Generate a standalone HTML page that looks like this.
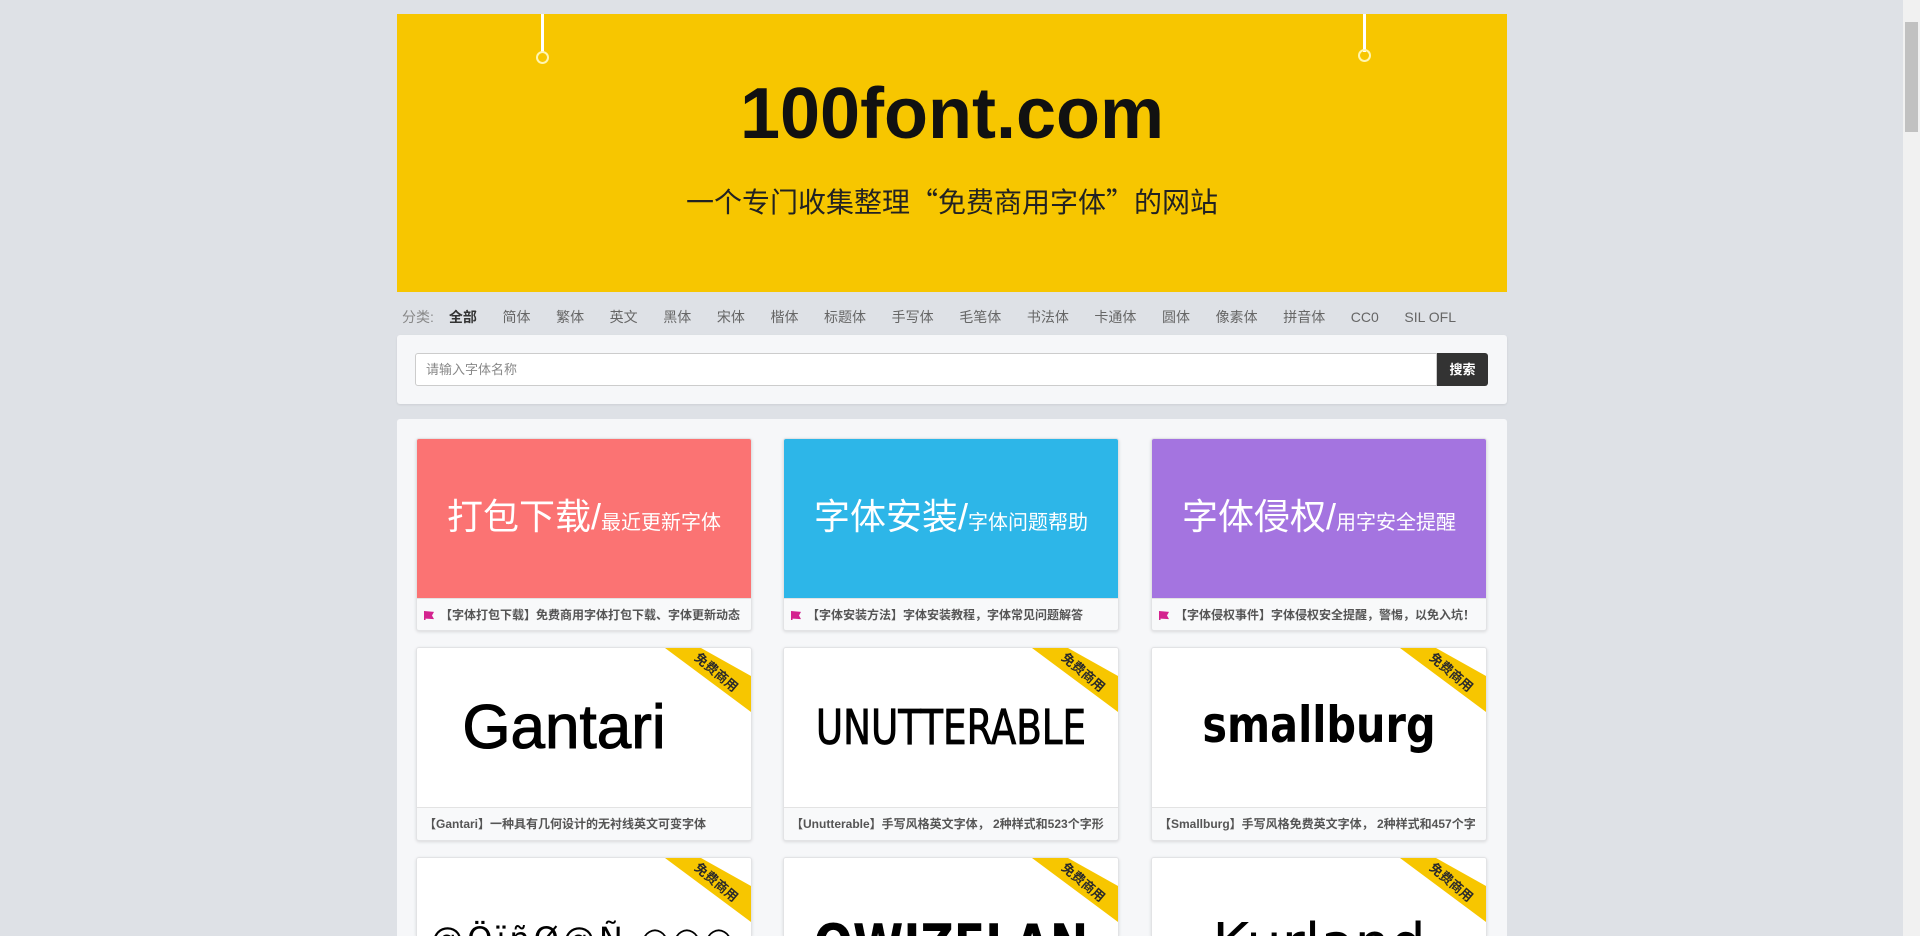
<!DOCTYPE html>
<html><head><meta charset="utf-8">
<style>
*{margin:0;padding:0;box-sizing:border-box}
html,body{width:1920px;height:936px;overflow:hidden;background:#dee1e6;font-family:"Liberation Sans","Noto Sans CJK SC",sans-serif}
#wrap{position:relative;width:1920px;height:936px;overflow:hidden}
.abs{position:absolute}
#banner{left:397px;top:14px;width:1110px;height:278px;background:#f7c600}
.str{position:absolute;width:3px;background:#fff;top:0;height:38px}
.ring{position:absolute;width:13px;height:13px;border:2px solid #fff6b0;border-radius:50%}
#title{left:0;width:1110px;top:55px;text-align:center;font-size:72px;font-weight:bold;color:#111;line-height:90px}
#sub{left:0;width:1110px;top:167px;text-align:center;font-size:28px;color:#222;line-height:40px;font-family:"Noto Sans CJK SC",sans-serif}
#cats{left:402px;top:307px;font-size:14px;color:#666;line-height:20px;white-space:nowrap}
#cats span{margin-right:25.6px}
#cats .lab{color:#888;margin-right:15px}
#cats .on{color:#333;font-weight:bold}
#search{left:397px;top:335px;width:1110px;height:69px;background:#f6f7f9;border-radius:3px;box-shadow:0 1px 2px rgba(0,0,0,.08)}
#inp{left:18px;top:18px;width:1022px;height:33px;background:#fff;border:1px solid #ccc;border-radius:3px 0 0 3px;font-size:13px;color:#888;line-height:31px;padding-left:10px}
#btn{left:1040px;top:18px;width:51px;height:33px;background:#333;color:#fff;font-size:13px;font-weight:bold;text-align:center;line-height:33px;border-radius:0 3px 3px 0}
#main{left:397px;top:419px;width:1110px;height:517px;background:#f6f7f9;border-radius:3px 3px 0 0}
.card{position:absolute;width:336px;background:#f8f9fa;border:1px solid #e2e3e5;border-radius:3px;box-shadow:0 1px 3px rgba(0,0,0,.12);overflow:hidden}
.img{position:absolute;left:0;top:0;width:334px;height:160px;background:#fff;overflow:hidden;border-bottom:1px solid #e3e3e3}
.cap{position:absolute;left:0;top:160px;width:334px;height:33px;line-height:33px;font-size:12px;font-weight:bold;color:#555;padding-left:7px;white-space:nowrap;overflow:hidden}
.flag{display:inline-block;width:10px;height:9px;background:#d4238f;margin-right:6px;vertical-align:-1px;clip-path:polygon(0 0,100% 10%,80% 50%,100% 90%,15% 85%,15% 100%,0 100%)}
.big{position:absolute;left:0;width:334px;top:48px;text-align:center;color:#fff;font-size:36px;white-space:nowrap;line-height:60px}
.big small{font-size:20px}
.rib{position:absolute;right:0;top:0;width:86px;height:64px}
.rib svg{position:absolute;left:0;top:0}
.rib b{position:absolute;left:26px;top:16px;font-size:13px;font-weight:bold;color:#2a2a2a;transform:rotate(40deg);white-space:nowrap;font-family:"Noto Sans CJK SC",sans-serif;line-height:15px}
.logo{position:absolute;left:0;width:334px;text-align:center;color:#000;white-space:nowrap}
#sb{left:1903px;top:0;width:17px;height:936px;background:#f1f1f1}
#thumb{left:1905px;top:22px;width:13px;height:110px;background:#c1c1c1}
.r3{height:79px;border-bottom:none;border-radius:3px 3px 0 0}
</style></head><body><div id="wrap">

<div id="banner" class="abs">
  <div class="str" style="left:144px"></div>
  <div class="ring" style="left:139px;top:37px"></div>
  <div class="str" style="left:966px"></div>
  <div class="ring" style="left:961px;top:35px"></div>
  <div id="title" class="abs">100font.com</div>
  <div id="sub" class="abs">一个专门收集整理“免费商用字体”的网站</div>
</div>

<div id="cats" class="abs"><span class="lab">分类:</span><span class="on">全部</span><span>简体</span><span>繁体</span><span>英文</span><span>黑体</span><span>宋体</span><span>楷体</span><span>标题体</span><span>手写体</span><span>毛笔体</span><span>书法体</span><span>卡通体</span><span>圆体</span><span>像素体</span><span>拼音体</span><span>CC0</span><span>SIL OFL</span></div>

<div id="search" class="abs">
  <div id="inp" class="abs">请输入字体名称</div>
  <div id="btn" class="abs">搜索</div>
</div>

<div id="main" class="abs"></div>

<div class="card" style="left:416px;top:438px;height:193px">
  <div class="img" style="background:#fb7373"><div class="big">打包下载/<small>最近更新字体</small></div></div>
  <div class="cap"><i class="flag"></i>【字体打包下载】免费商用字体打包下载、字体更新动态</div>
</div>
<div class="card" style="left:783px;top:438px;height:193px">
  <div class="img" style="background:#2db6e8"><div class="big">字体安装/<small>字体问题帮助</small></div></div>
  <div class="cap"><i class="flag"></i>【字体安装方法】字体安装教程，字体常见问题解答</div>
</div>
<div class="card" style="left:1151px;top:438px;height:193px">
  <div class="img" style="background:#a474e0"><div class="big">字体侵权/<small>用字安全提醒</small></div></div>
  <div class="cap"><i class="flag"></i>【字体侵权事件】字体侵权安全提醒，警惕，以免入坑！</div>
</div>

<div class="card" style="left:416px;top:647px;height:194px">
  <div class="img"><div class="logo" style="top:40px;left:-20px;font-size:62px;line-height:80px;-webkit-text-stroke:1px #000">Gantari</div>
  <div class="rib"><svg width="86" height="64"><polygon points="0,0 36,0 86,28 86,64" fill="#f7c600"/></svg><b>免费商用</b></div></div>
  <div class="cap">【Gantari】一种具有几何设计的无衬线英文可变字体</div>
</div>
<div class="card" style="left:783px;top:647px;height:194px">
  <div class="img"><div class="logo" style="top:44px;font-size:46px;line-height:70px;font-family:'DejaVu Sans Condensed',sans-serif;transform:scale(0.9,1.05);-webkit-text-stroke:0.8px #000">UNUTTERABLE</div>
  <div class="rib"><svg width="86" height="64"><polygon points="0,0 36,0 86,28 86,64" fill="#f7c600"/></svg><b>免费商用</b></div></div>
  <div class="cap">【Unutterable】手写风格英文字体， 2种样式和523个字形</div>
</div>
<div class="card" style="left:1151px;top:647px;height:194px">
  <div class="img"><div class="logo" style="top:42px;font-size:50px;line-height:70px;font-weight:bold;font-family:'DejaVu Sans Condensed',sans-serif;transform:scaleX(0.92)">smallburg</div>
  <div class="rib"><svg width="86" height="64"><polygon points="0,0 36,0 86,28 86,64" fill="#f7c600"/></svg><b>免费商用</b></div></div>
  <div class="cap">【Smallburg】手写风格免费英文字体， 2种样式和457个字</div>
</div>

<div class="card r3" style="left:416px;top:857px">
  <div class="img"><div class="logo" style="top:56px;font-size:32px;line-height:50px;letter-spacing:4px;font-family:'DejaVu Sans',sans-serif">@ÖïñØ@Ñ ○○○</div>
  <div class="rib"><svg width="86" height="64"><polygon points="0,0 36,0 86,28 86,64" fill="#f7c600"/></svg><b>免费商用</b></div></div>
</div>
<div class="card r3" style="left:783px;top:857px">
  <div class="img"><div class="logo" style="top:52px;font-size:54px;line-height:70px;font-weight:bold;font-family:'DejaVu Sans',sans-serif;transform:scaleX(0.85)">QWIZELAN</div>
  <div class="rib"><svg width="86" height="64"><polygon points="0,0 36,0 86,28 86,64" fill="#f7c600"/></svg><b>免费商用</b></div></div>
</div>
<div class="card r3" style="left:1151px;top:857px">
  <div class="img"><div class="logo" style="top:52px;font-size:56px;line-height:70px;font-family:'DejaVu Sans',sans-serif">Kurland</div>
  <div class="rib"><svg width="86" height="64"><polygon points="0,0 36,0 86,28 86,64" fill="#f7c600"/></svg><b>免费商用</b></div></div>
</div>

<div id="sb" class="abs"></div>
<div id="thumb" class="abs"></div>
</div></body></html>
